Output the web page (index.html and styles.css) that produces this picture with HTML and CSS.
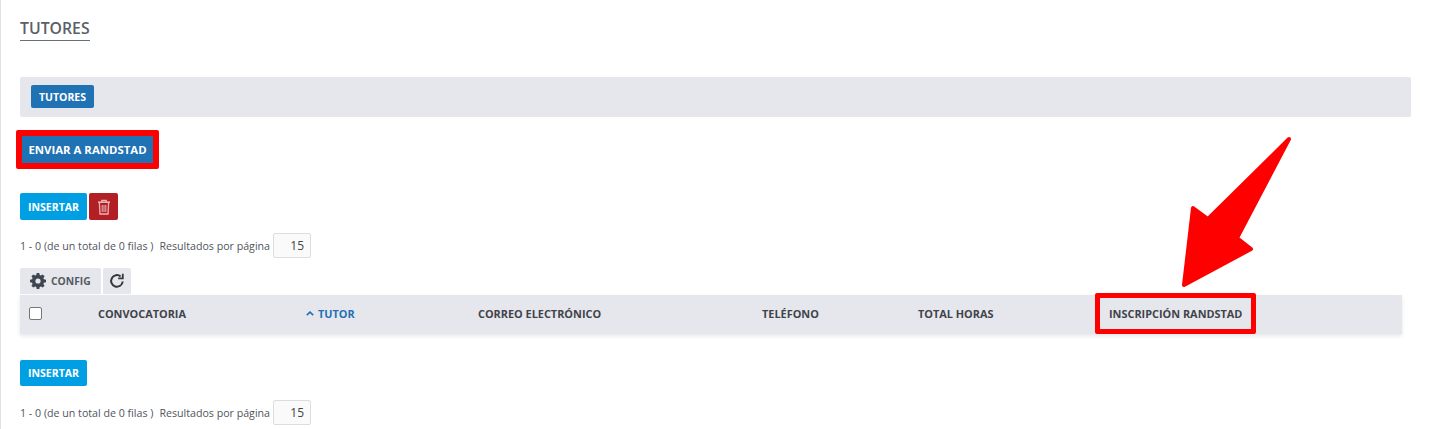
FILE: index.html
```html
<!DOCTYPE html>
<html lang="es">
<head>
<meta charset="utf-8">
<title>Tutores</title>
<link rel="stylesheet" href="styles.css">
</head>
<body>
<main class="page">
  <h1 class="title"><span>TUTORES</span></h1>
  <nav class="tabbar"><button class="btn btn-blue">TUTORES</button></nav>
  <div class="send-row"><button class="btn btn-blue btn-send">ENVIAR A RANDSTAD</button></div>
  <div class="actions">
    <button class="btn btn-cyan">INSERTAR</button>
    <button class="btn btn-red" aria-label="Eliminar">
      <svg width="14" height="16" viewBox="0 0 14 16" fill="none" stroke="#e9b4b4" stroke-width="1.3">
        <path d="M1 3.2h12" stroke-width="1.6"/>
        <path d="M4.8 3V1.4h4.4V3"/>
        <path d="M2.4 3.6l.6 11.4h8l.6-11.4"/>
        <path d="M5.2 6v7M7 6v7M8.8 6v7" stroke-width="1"/>
      </svg>
    </button>
  </div>
  <div class="pager">
    <span>1 - 0 (de un total de 0 filas )</span>
    <span class="per-page">Resultados por página</span>
    <input class="page-size" value="15" aria-label="Resultados por página">
  </div>
  <div class="tools">
    <div class="tool tool-config">
      <svg width="16" height="16" viewBox="0 0 16 16" fill="#3f4652"><path fill-rule="evenodd" d="M6.7 0h2.6l.4 2.1 1.2.5L12.7 1.4l1.9 1.9-1.2 1.8.5 1.2 2.1.4v2.6l-2.1.4-.5 1.2 1.2 1.8-1.9 1.9-1.8-1.2-1.2.5-.4 2.1H6.7l-.4-2.1-1.2-.5-1.8 1.2-1.9-1.9 1.2-1.8-.5-1.2L0 9.300V6.700l2.100-.4.5-1.200-1.200-1.800 1.900-1.900 1.800 1.200 1.200-.5zM8 5.400a2.600 2.600 0 1 0 0 5.200 2.600 2.600 0 0 0 0-5.200z"/></svg>
      <span>CONFIG</span>
    </div>
    <div class="tool tool-refresh" aria-label="Actualizar">
      <svg width="16" height="16" viewBox="0 0 16 16" fill="none" stroke="#33373e" stroke-width="2"><path d="M13.700 8.500A5.800 5.800 0 1 1 11.600 3.400"/><path d="M13.800 .8v4.600H9.200" stroke-width="1.800"/></svg>
    </div>
  </div>
  <div class="grid-head">
    <div class="cell cell-check"><span class="checkbox"></span></div>
    <div class="cell">CONVOCATORIA</div>
    <div class="cell cell-sorted">
      <svg width="8" height="5" viewBox="0 0 8 5" fill="none" stroke="#1f72b3" stroke-width="1.600"><path d="M.8 4.200L4 1.200l3.200 3"/></svg>
      TUTOR
    </div>
    <div class="cell">CORREO ELECTRÓNICO</div>
    <div class="cell">TELÉFONO</div>
    <div class="cell">TOTAL HORAS</div>
    <div class="cell cell-flagged"><span class="flag-box">INSCRIPCIÓN RANDSTAD</span></div>
  </div>
  <div class="actions actions-bottom">
    <button class="btn btn-cyan">INSERTAR</button>
  </div>
  <div class="pager pager-bottom">
    <span>1 - 0 (de un total de 0 filas )</span>
    <span class="per-page">Resultados por página</span>
    <input class="page-size" value="15" aria-label="Resultados por página">
  </div>
  <svg class="arrow" width="120" height="160" viewBox="1180 135 120 160" fill="#ff0000" stroke="#ff0000" stroke-width="4" stroke-linejoin="round"><path d="M1289 139L1237 238L1251 249L1184 285L1193 208L1208 219Z"/></svg>
</main>
</body>
</html>
```
FILE: styles.css
```css
* { box-sizing: border-box; }
html, body { margin: 0; padding: 0; height: 429px; overflow: hidden; background: #fff; }
body { font-family: "Open Sans", "Liberation Sans", sans-serif; color: #4a4f57; }
.page { position: relative; height: 429px; padding-left: 19px; border-left: 1px solid #e2e2e2; }
.title { margin: 0; padding-top: 17px; height: 77px; font-size: 15.800px; line-height: 22px; font-weight: 600; color: #5a5f68; }
.title span { display: inline-block; border-bottom: 1px solid #6b6f76; padding-bottom: 1px; height: 24px; }
.tabbar { width: 1391px; height: 40px; padding: 8px 11px; background: #e6e7ec; border-radius: 2px; }
.btn { display: block; border: 0; padding: 0; margin: 0; color: #fff; font-family: inherit; font-size: 10.500px; font-weight: 700; border-radius: 2px; text-align: center; }
.btn-blue { background: #1f72b3; }
.tabbar .btn { width: 63px; height: 23px; }
.send-row { padding-top: 13px; height: 76px; }
.btn-send { width: 143px; height: 39px; margin-left: -4px; border: 6px solid #ff0000; border-radius: 2px; background-clip: padding-box; font-size: 11.400px; }
.actions { display: flex; gap: 2px; height: 27px; }
.btn-cyan { width: 67px; height: 27px; background: #009fe3; }
.btn-red { width: 29px; height: 27px; background: #b21f24; display: flex; align-items: center; justify-content: center; }
.pager { display: flex; align-items: center; margin-top: 13px; height: 25px; font-size: 10.650px; color: #50555c; }
.per-page { margin-left: 6px; }
.page-size { width: 38px; height: 25px; margin-left: 3px; padding: 0 6px 0 0; border: 1px solid #dcdde0; border-radius: 2px; text-align: right; font-family: inherit; font-size: 12px; color: #444; background: #fafafa; }
.tools { display: flex; gap: 2px; margin-top: 10px; height: 27px; }
.tool { display: flex; align-items: center; background: #e6e7ec; height: 26px; border-radius: 2px 2px 0 0; font-size: 10.300px; font-weight: 700; color: #555a63; }
.tool-config { width: 81px; padding-left: 10px; gap: 5px; }
.tool-refresh { width: 28px; justify-content: center; }
.grid-head { display: grid; grid-template-columns: 78px 208px 172px 284px 156px 191px 1fr; align-items: center; width: 1382px; height: 39px; padding-bottom: 2px; background: #e6e7ec; box-shadow: 0 2px 4px rgba(0,0,0,.1); font-size: 10.900px; font-weight: 700; color: #3f434b; }
.cell { white-space: nowrap; }
.cell-check { padding-left: 9px; display: flex; }
.checkbox { display: block; width: 13px; height: 13px; background: #fff; border: 1px solid #777; border-radius: 2px; }
.cell-sorted { color: #1f72b3; display: flex; align-items: center; gap: 4px; }
.flag-box { display: block; margin: -5px 0 -5px -14px; width: 161px; height: 41px; padding-left: 9px; line-height: 31px; border: 5px solid #ff0000; border-radius: 2px; }
.actions-bottom { margin-top: 26px; height: 26px; }
.actions-bottom .btn-cyan { height: 26px; }
.pager-bottom { margin-top: 14px; }
.arrow { position: absolute; left: 1179px; top: 135px; }
```
